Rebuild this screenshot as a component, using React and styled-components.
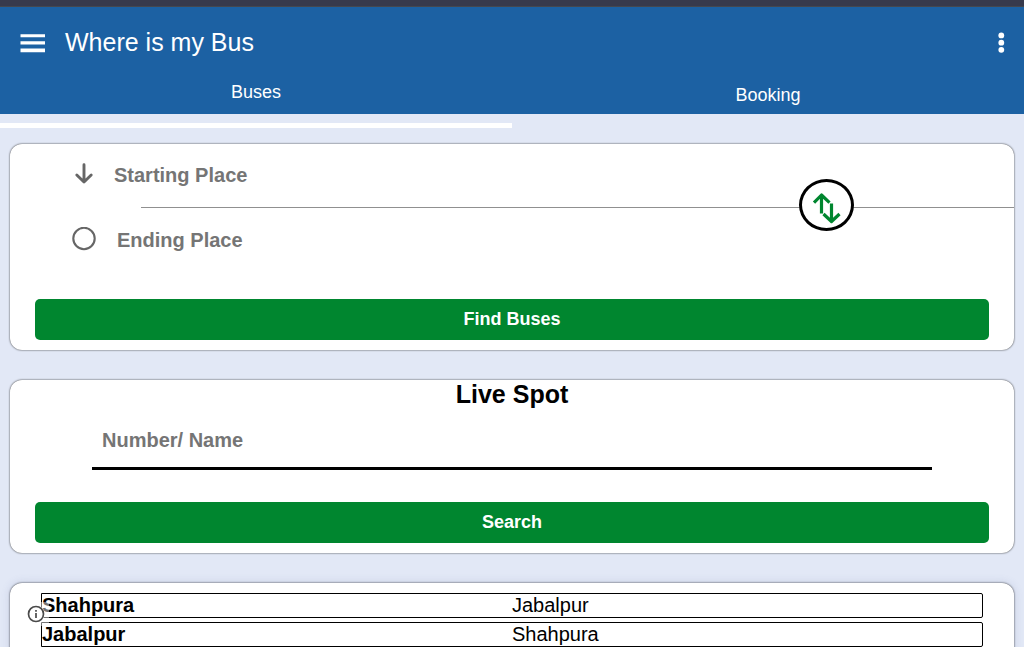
import React from "react";
import styled, { createGlobalStyle } from "styled-components";

const GlobalStyle = createGlobalStyle`
  *, *::before, *::after { box-sizing: border-box; }
  html, body { margin: 0; padding: 0; overflow: hidden; }
  body {
    background: #e2e8f6;
    font-family: Arial, "Liberation Sans", sans-serif;
    color: #000;
  }
`;

const Page = styled.div`
  height: 647px;
  overflow: hidden;
`;

const Header = styled.header`
  height: 114px;
  background: #1c61a3;
  color: #fff;
  border-top: 6px solid #373a4c;
`;

const EdgeLine = styled.div`
  height: 1px;
  background: #45484f;
`;

const TitleBar = styled.div`
  display: flex;
  align-items: center;
  height: 71px;
  padding: 0 18px 0 20px;
`;

const MenuIcon = styled.svg`
  display: block;
  width: 25px;
  height: 20px;
`;

const Title = styled.h1`
  flex: 1;
  margin: 0 0 0 20px;
  padding-bottom: 2px;
  font-size: 25px;
  line-height: 28px;
  font-weight: 400;
`;

const DotsIcon = styled.svg`
  display: block;
  width: 10px;
  height: 22px;
`;

const Tabs = styled.nav`
  display: flex;
`;

const Tab = styled.div`
  flex: 1;
  padding-top: ${(p) => p.$drop}px;
  text-align: center;
  font-size: 18px;
  line-height: 20px;
`;

const Indicator = styled.div`
  width: 50%;
  height: 5px;
  margin-top: 9px;
  background: #fff;
`;

const Cards = styled.main`
  display: flex;
  flex-direction: column;
  gap: 30px;
  padding: 16px 10px 0;
`;

const Card = styled.section`
  height: ${(p) => p.$height}px;
  flex: none;
  background: #fff;
  border-radius: 12px;
  box-shadow: ${(p) => (p.$soft ? "0 0 10px rgba(90, 100, 150, 0.2), " : "")}0 0 2px #222;
`;

const RouteFields = styled.div`
  position: relative;
  height: 155px;
`;

const Field = styled.div`
  display: flex;
  align-items: center;
  height: 63px;
  padding: 0 0 ${(p) => p.$lift}px 61px;
  color: #757575;
  font-size: 20px;
  line-height: 22px;
  font-weight: 700;
`;

const FieldIcon = styled.svg`
  display: block;
  width: 26px;
  height: 26px;
  margin-right: ${(p) => p.$gap}px;
`;

const Divider = styled.div`
  height: 1px;
  margin-left: 131px;
  background: #909090;
`;

const SwapButton = styled.button`
  position: absolute;
  left: 789px;
  top: 35px;
  width: 55px;
  height: 52px;
  padding: 0;
  border: 3px solid #000;
  border-radius: 50%;
  background: #fff;
`;

const SwapIcon = styled.svg`
  display: block;
  width: 49px;
  height: 46px;
`;

const ActionButton = styled.button`
  display: block;
  width: 954px;
  height: 41px;
  margin: 0 auto;
  padding: 0 0 2px;
  border: 0;
  border-radius: 5px;
  background: #00862f;
  color: #fff;
  font: 700 18px/20px Arial, "Liberation Sans", sans-serif;
`;

const SpotTitle = styled.h2`
  margin: 0;
  padding-bottom: 1px;
  text-align: center;
  font-size: 25px;
  line-height: 28px;
`;

const SearchField = styled.div`
  width: 840px;
  height: 61px;
  margin: 0 auto 32px;
  padding: 20px 10px 0;
  border-bottom: 3px solid #000;
  color: #757575;
  font-size: 20px;
  line-height: 23px;
  font-weight: 700;
`;

const RouteList = styled.div`
  position: relative;
  display: flex;
  flex-direction: column;
  gap: 4px;
  padding: 10px 31px 0;
`;

const RouteRow = styled.div`
  display: grid;
  grid-template-columns: 470px 1fr;
  height: 25px;
  border: 1px solid #000;
  border-radius: 0 2px 2px 0;
  font-size: 20px;
  line-height: 23px;
`;

const Origin = styled.span`
  font-weight: 700;
`;

const Destination = styled.span``;

const InfoBadge = styled.div`
  position: absolute;
  left: 14px;
  top: 19px;
  width: 25px;
  height: 24px;
  background: radial-gradient(circle at 12px 12px, #fff 8px, rgba(255, 255, 255, 0.45) 9px);
`;

const InfoIcon = styled.svg`
  display: block;
  width: 25px;
  height: 24px;
`;

const routes = [
  ["Shahpura", "Jabalpur"],
  ["Jabalpur", "Shahpura"],
];

export default function App() {
  return (
    <Page>
      <GlobalStyle />
      <Header>
        <EdgeLine />
        <TitleBar>
          <MenuIcon viewBox="0 0 25 20" fill="#fff">
            <path d="M.5 1.300h24.500v3H.5zM.5 8.300h24.500v3.200H.5zM.5 15.500h24.500v3.700H.5z" />
          </MenuIcon>
          <Title>Where is my Bus</Title>
          <DotsIcon viewBox="0 0 10 22" fill="#fff">
            <circle cx="5.300" cy="3.400" r="2.900" />
            <circle cx="5.300" cy="10.700" r="2.900" />
            <circle cx="5.300" cy="17.800" r="2.900" />
          </DotsIcon>
        </TitleBar>
        <Tabs>
          <Tab $drop={4}>Buses</Tab>
          <Tab $drop={7}>Booking</Tab>
        </Tabs>
      </Header>
      <Indicator />
      <Cards>
        <Card $height={206}>
          <RouteFields>
            <Field $lift={2}>
              <FieldIcon $gap={17} viewBox="0 0 26 26" fill="none" stroke="#666" strokeWidth="2.900" strokeLinecap="round" strokeLinejoin="round">
                <path d="M13 2.800V20M5.800 13L13 20L20.200 13" />
              </FieldIcon>
              Starting Place
            </Field>
            <Divider />
            <Field $lift={0}>
              <FieldIcon $gap={20} viewBox="0 0 26 26" fill="none" stroke="#666" strokeWidth="2.100">
                <circle cx="13" cy="11.500" r="10.700" />
              </FieldIcon>
              Ending Place
            </Field>
            <SwapButton aria-label="Swap places">
              <SwapIcon viewBox="0 0 49 46" fill="none" stroke="#00862f" strokeWidth="3.200" strokeLinejoin="round">
                <path d="M19.500 31.500V13M12 20.700L19.500 13L27.500 20.700M29.500 21.500V39.500M21.500 32L29.500 39.500L37.500 32" />
              </SwapIcon>
            </SwapButton>
          </RouteFields>
          <ActionButton>Find Buses</ActionButton>
        </Card>
        <Card $height={173}>
          <SpotTitle>Live Spot</SpotTitle>
          <SearchField>Number/ Name</SearchField>
          <ActionButton>Search</ActionButton>
        </Card>
        <Card $height={200} $soft>
          <RouteList>
            {routes.map(([from, to]) => (
              <RouteRow key={from}>
                <Origin>{from}</Origin>
                <Destination>{to}</Destination>
              </RouteRow>
            ))}
            <InfoBadge>
              <InfoIcon viewBox="0 0 25 24" fill="none" stroke="#4a4a4a" strokeWidth="1.700">
                <circle cx="12" cy="12" r="7.500" />
                <path d="M12 11v5M12 8v1.700" />
              </InfoIcon>
            </InfoBadge>
          </RouteList>
        </Card>
      </Cards>
    </Page>
  );
}
